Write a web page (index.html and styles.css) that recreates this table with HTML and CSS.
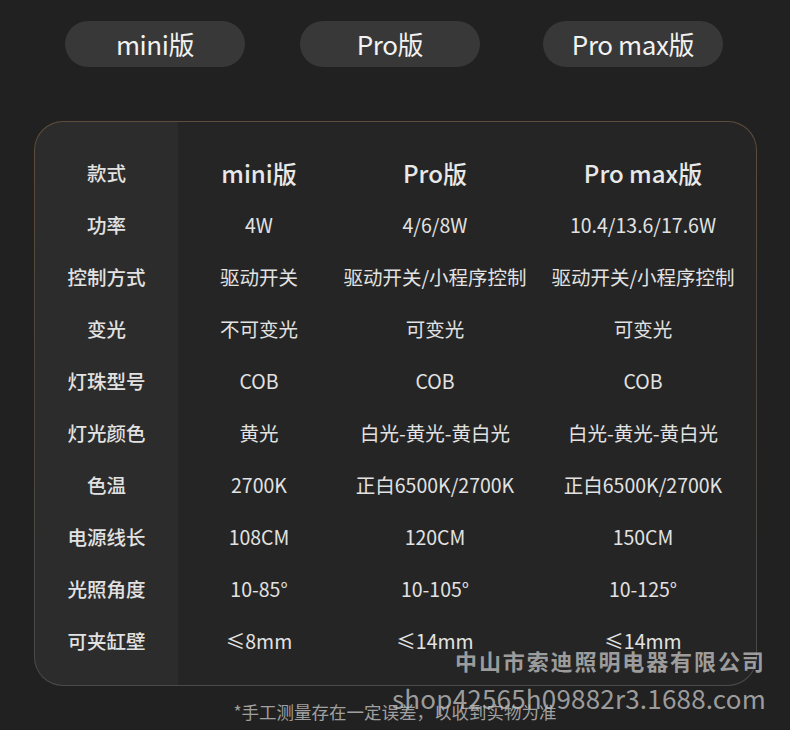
FILE: index.html
```html
<!DOCTYPE html>
<html lang="zh-CN">
<head>
<meta charset="utf-8">
<link rel="stylesheet" href="styles.css">
</head>
<body>
<div class="page">
  <div class="tabs">
    <div class="pill">mini版</div>
    <div class="pill">Pro版</div>
    <div class="pill pill-last">Pro max版</div>
  </div>

  <div class="card-frame">
    <div class="card">
      <div class="row head">
        <div class="label">款式</div>
        <div class="cell">mini版</div>
        <div class="cell">Pro版</div>
        <div class="cell">Pro max版</div>
      </div>
      <div class="row">
        <div class="label">功率</div>
        <div class="cell">4W</div>
        <div class="cell">4/6/8W</div>
        <div class="cell">10.4/13.6/17.6W</div>
      </div>
      <div class="row">
        <div class="label">控制方式</div>
        <div class="cell">驱动开关</div>
        <div class="cell">驱动开关/小程序控制</div>
        <div class="cell">驱动开关/小程序控制</div>
      </div>
      <div class="row">
        <div class="label">变光</div>
        <div class="cell">不可变光</div>
        <div class="cell">可变光</div>
        <div class="cell">可变光</div>
      </div>
      <div class="row">
        <div class="label">灯珠型号</div>
        <div class="cell">COB</div>
        <div class="cell">COB</div>
        <div class="cell">COB</div>
      </div>
      <div class="row">
        <div class="label">灯光颜色</div>
        <div class="cell">黄光</div>
        <div class="cell">白光-黄光-黄白光</div>
        <div class="cell">白光-黄光-黄白光</div>
      </div>
      <div class="row">
        <div class="label">色温</div>
        <div class="cell">2700K</div>
        <div class="cell">正白6500K/2700K</div>
        <div class="cell">正白6500K/2700K</div>
      </div>
      <div class="row">
        <div class="label">电源线长</div>
        <div class="cell">108CM</div>
        <div class="cell">120CM</div>
        <div class="cell">150CM</div>
      </div>
      <div class="row">
        <div class="label">光照角度</div>
        <div class="cell">10-85°</div>
        <div class="cell">10-105°</div>
        <div class="cell">10-125°</div>
      </div>
      <div class="row">
        <div class="label">可夹缸壁</div>
        <div class="cell">≤8mm</div>
        <div class="cell">≤14mm</div>
        <div class="cell">≤14mm</div>
      </div>
    </div>
  </div>

  <p class="note">*手工测量存在一定误差，以收到实物为准</p>

  <div class="wm wm-company">中山市索迪照明电器有限公司</div>
  <div class="wm wm-shop">shop42565h09882r3.1688.com</div>
</div>
</body>
</html>
```

FILE: styles.css
```css
html, body {
  margin: 0;
  padding: 0;
  background: #212121;
}

body {
  width: 790px;
  height: 730px;
  overflow: hidden;
  font-family: "Noto Sans CJK SC", "Noto Sans", sans-serif;
  color: #e4e4e4;
}

.page {
  position: relative;
  width: 790px;
  height: 730px;
}

.tabs {
  display: flex;
  gap: 55px;
  margin-left: 65px;
  padding-top: 21px;
}

.pill {
  width: 180px;
  height: 46px;
  border-radius: 23px;
  background: #383838;
  color: #f2f2f2;
  font-size: 26px;
  line-height: 46px;
  text-align: center;
  letter-spacing: -0.4px;
}

.pill-last {
  margin-left: 8px;
}

.card-frame {
  margin: 54px 0 0 34px;
  width: 723px;
  height: 565px;
  box-sizing: border-box;
  padding: 1px;
  border-radius: 29px;
  background: linear-gradient(to bottom, #5e4d3b 0%, #4d463f 45%, #4a4a4a 100%);
}

.card {
  height: 100%;
  box-sizing: border-box;
  border-radius: 28px;
  padding-top: 24px;
  background: linear-gradient(to right, #2c2c2c 0, #2c2c2c 143px, #252525 143px, #252525 100%);
}

.row {
  display: grid;
  grid-template-columns: 143px 162px 190px 226px;
  height: 52px;
  align-items: center;
}

.label {
  text-align: center;
  font-size: 19.5px;
  font-weight: 500;
  color: #e2e2e2;
}

.cell {
  text-align: center;
  font-size: 19.5px;
  color: #e2e2e2;
  white-space: nowrap;
}

.head .cell {
  font-size: 24px;
  font-weight: 500;
  color: #e8e8e8;
}

.note {
  margin: 0;
  position: absolute;
  left: 0;
  right: 0;
  top: 700px;
  text-align: center;
  font-size: 17.5px;
  line-height: 24px;
  color: #a0a0a0;
}

.wm {
  position: absolute;
  white-space: nowrap;
  color: rgba(190, 190, 190, 0.8);
}

.wm-company {
  left: 455px;
  top: 643px;
  font-size: 22px;
  line-height: 34px;
  font-weight: 700;
  letter-spacing: 1.9px;
}

.wm-shop {
  left: 392px;
  top: 680px;
  font-size: 26px;
  line-height: 36px;
  letter-spacing: 0.2px;
}
```
